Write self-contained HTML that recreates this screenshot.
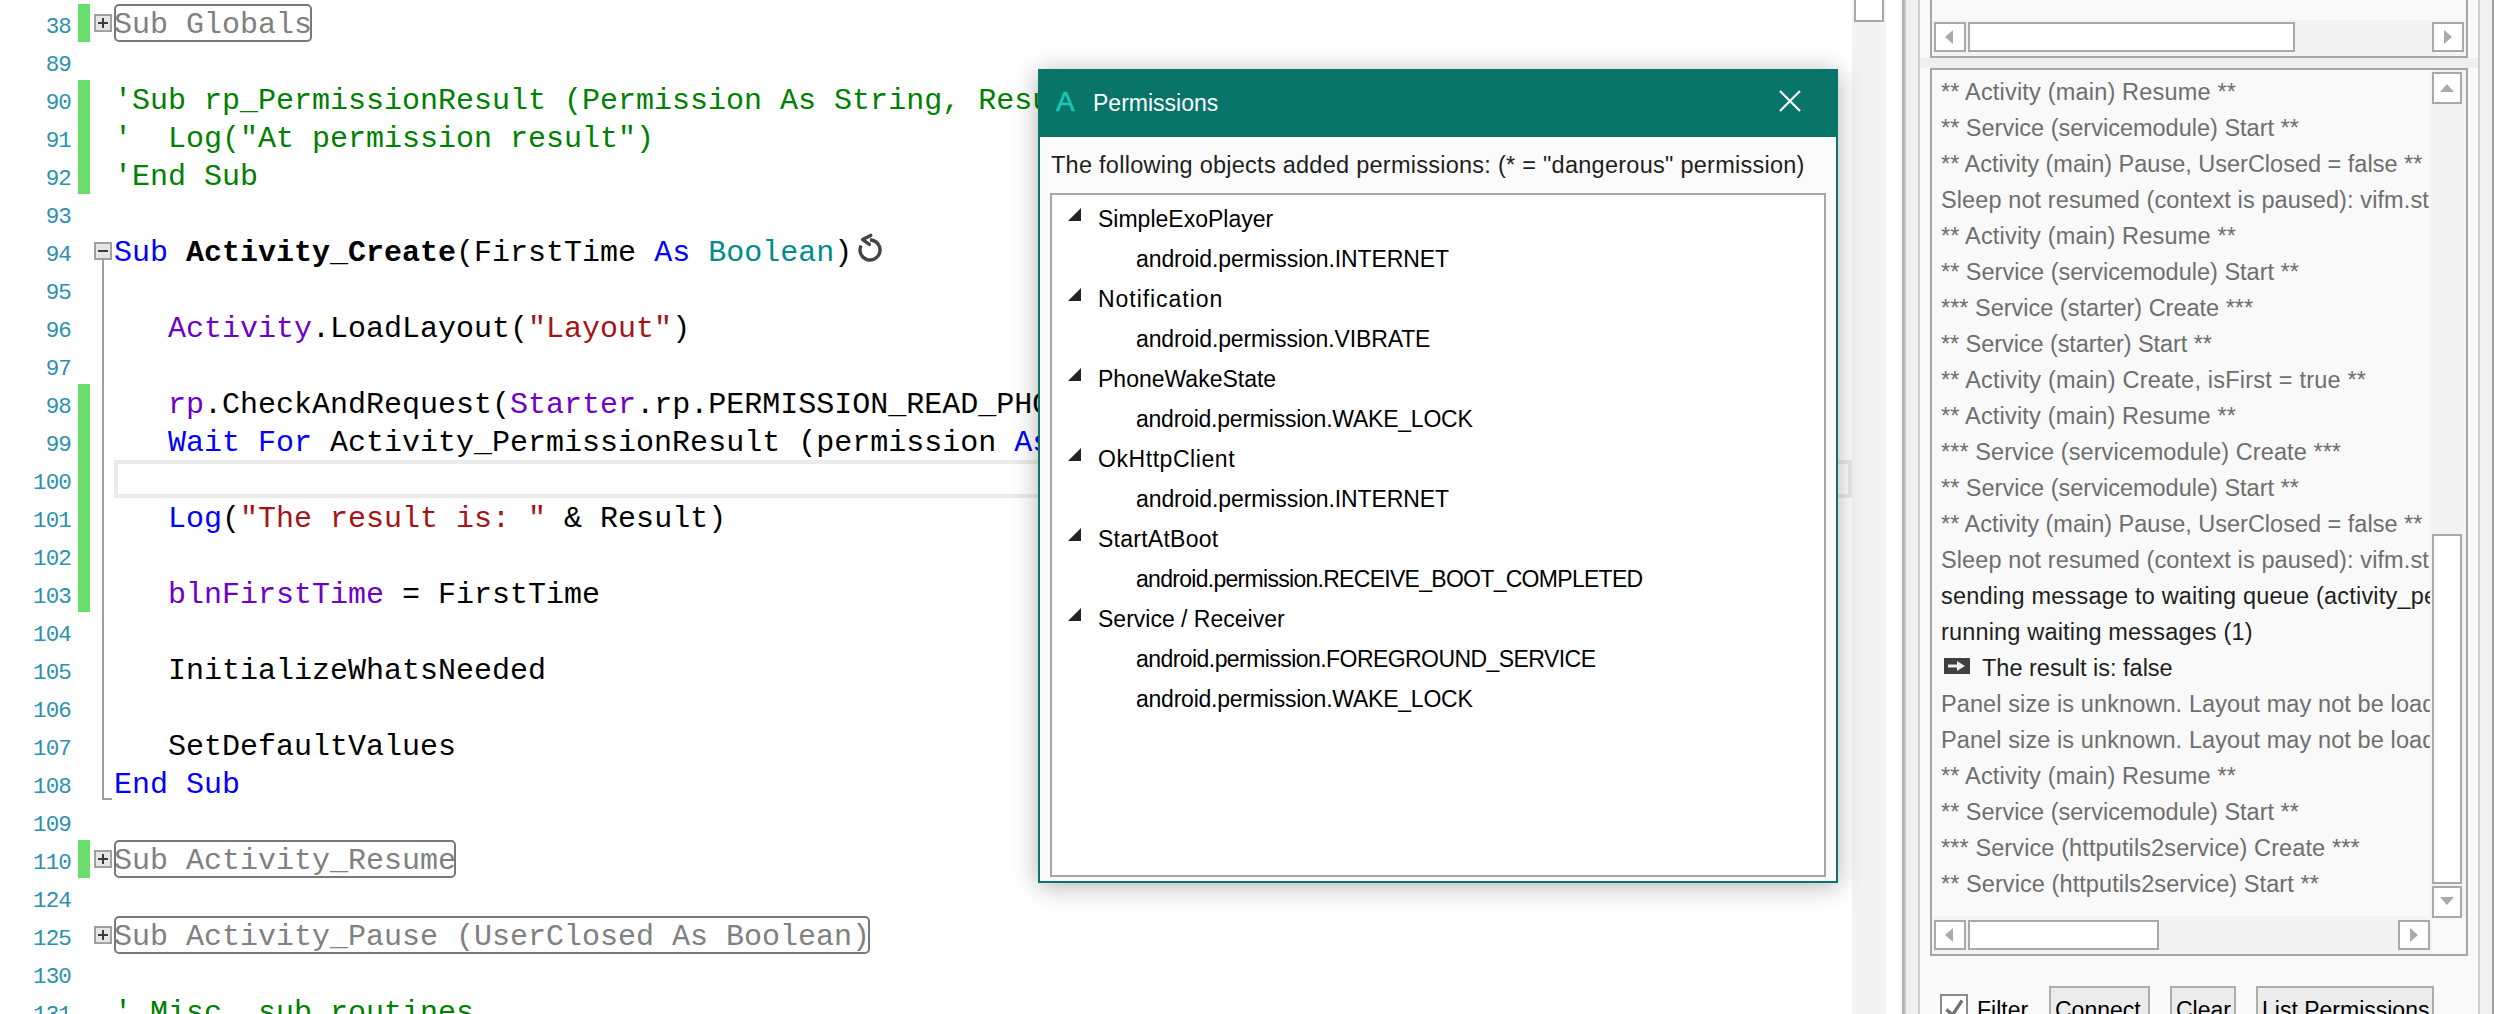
<!DOCTYPE html>
<html><head><meta charset="utf-8">
<style>
*{margin:0;padding:0;box-sizing:border-box}
html,body{width:2494px;height:1014px;overflow:hidden;background:#fff;position:relative}
.a{position:absolute}
.ln{position:absolute;left:0;width:71px;text-align:right;font-family:"Liberation Mono",monospace;font-size:22.5px;letter-spacing:-0.85px;line-height:38px;color:#2b91af;white-space:pre}
.cl{position:absolute;left:114px;font-family:"Liberation Mono",monospace;font-size:30px;line-height:38px;color:#000;white-space:pre}
.g{position:absolute;left:78px;width:12px;background:#6ade6a}
.cm{color:#008000}.kw{color:#0000ff}.ty{color:#008b8b}.ob{color:#6f00c6}.st{color:#a31515}.bd{font-weight:bold}
.fold{position:absolute;left:94px;width:18px;height:18px;border:2px solid #a0a0a0;background:#e6e6e6}
.fold:before{content:"";position:absolute;left:2px;top:6.3px;width:10px;height:1.5px;background:#3a3a3a}
.fold.p:after{content:"";position:absolute;left:6.3px;top:2px;width:1.5px;height:10px;background:#3a3a3a}
.col{position:absolute;left:114px;height:38px;border:2px solid #787878;border-radius:5px}
.cg{color:#808080}
.ss{font-family:"Liberation Sans",sans-serif}
.log{position:absolute;left:1941px;font-family:"Liberation Sans",sans-serif;font-size:23.5px;line-height:36px;color:#6e6e6e}
.log div{height:36px;white-space:pre}
.log .k{color:#1e1e1e}
.tr{position:absolute;font-family:"Liberation Sans",sans-serif;font-size:23px;line-height:40px;color:#000;white-space:pre}
.tri{position:absolute;left:1068px;width:0;height:0;border-left:13px solid transparent;border-bottom:13px solid #222}
.btn{position:absolute;top:986px;height:40px;border:2px solid #adadad;background:#ececec;font-family:"Liberation Sans",sans-serif;font-size:23px;color:#000;padding-left:4px;line-height:44px}
</style></head><body>

<!-- gutter -->
<div class="ln" style="top:8px">38</div>
<div class="ln" style="top:46px">89</div>
<div class="ln" style="top:84px">90</div>
<div class="ln" style="top:122px">91</div>
<div class="ln" style="top:160px">92</div>
<div class="ln" style="top:198px">93</div>
<div class="ln" style="top:236px">94</div>
<div class="ln" style="top:274px">95</div>
<div class="ln" style="top:312px">96</div>
<div class="ln" style="top:350px">97</div>
<div class="ln" style="top:388px">98</div>
<div class="ln" style="top:426px">99</div>
<div class="ln" style="top:464px">100</div>
<div class="ln" style="top:502px">101</div>
<div class="ln" style="top:540px">102</div>
<div class="ln" style="top:578px">103</div>
<div class="ln" style="top:616px">104</div>
<div class="ln" style="top:654px">105</div>
<div class="ln" style="top:692px">106</div>
<div class="ln" style="top:730px">107</div>
<div class="ln" style="top:768px">108</div>
<div class="ln" style="top:806px">109</div>
<div class="ln" style="top:844px">110</div>
<div class="ln" style="top:882px">124</div>
<div class="ln" style="top:920px">125</div>
<div class="ln" style="top:958px">130</div>
<div class="ln" style="top:996px">131</div>

<div class="g" style="top:4px;height:38px"></div>
<div class="g" style="top:80px;height:114px"></div>
<div class="g" style="top:384px;height:228px"></div>
<div class="g" style="top:840px;height:38px"></div>

<!-- fold markers -->
<div class="fold p" style="top:14px"></div>
<div class="fold" style="top:242px"></div>
<div class="a" style="left:102px;top:260px;width:2px;height:540px;background:#a0a0a0"></div>
<div class="a" style="left:102px;top:798px;width:10px;height:2px;background:#a0a0a0"></div>
<div class="fold p" style="top:850px"></div>
<div class="fold p" style="top:926px"></div>

<!-- current line -->
<div class="a" style="left:114px;top:460px;width:1738px;height:38px;border:4px solid #ebebeb"></div>

<!-- collapsed boxes -->
<div class="col" style="top:4px;width:198px"></div>
<div class="col" style="top:840px;width:342px"></div>
<div class="col" style="top:916px;width:756px"></div>

<!-- code -->
<div class="cl cg" style="top:6px">Sub Globals</div>
<div class="cl cm" style="top:82px">'Sub rp_PermissionResult (Permission As String, Result As Boolean)</div>
<div class="cl cm" style="top:120px">'  Log("At permission result")</div>
<div class="cl cm" style="top:158px">'End Sub</div>
<div class="cl" style="top:234px"><span class="kw">Sub</span> <span class="bd">Activity_Create</span>(FirstTime <span class="kw">As</span> <span class="ty">Boolean</span>)</div>
<div class="cl" style="top:310px">   <span class="ob">Activity</span>.LoadLayout(<span class="st">"Layout"</span>)</div>
<div class="cl" style="top:386px">   <span class="ob">rp</span>.CheckAndRequest(<span class="ob">Starter</span>.rp.PERMISSION_READ_PHONE_STATE)</div>
<div class="cl" style="top:424px">   <span class="kw">Wait</span> <span class="kw">For</span> Activity_PermissionResult (permission <span class="kw">As</span> String, Result <span class="kw">As</span> Boolean)</div>
<div class="cl" style="top:500px">   <span class="kw">Log</span>(<span class="st">"The result is: "</span> &amp; Result)</div>
<div class="cl" style="top:576px">   <span class="ob">blnFirstTime</span> = FirstTime</div>
<div class="cl" style="top:652px">   InitializeWhatsNeeded</div>
<div class="cl" style="top:728px">   SetDefaultValues</div>
<div class="cl kw" style="top:766px">End Sub</div>
<div class="cl cg" style="top:842px">Sub Activity_Resume</div>
<div class="cl cg" style="top:918px">Sub Activity_Pause (UserClosed As Boolean)</div>
<div class="cl cm" style="top:994px">' Misc. sub routines</div>

<!-- undo icon -->
<svg class="a" style="left:852px;top:232px" width="36" height="36" viewBox="-18 -18 36 36">
<path d="M0 -10 A10 10 0 1 1 -8.9 -4.5" fill="none" stroke="#444" stroke-width="3.4"/>
<path d="M0.8 -14.6 L-7.4 -10.4 L-0.6 -5.6" fill="none" stroke="#444" stroke-width="3.4" stroke-linejoin="round" stroke-linecap="round"/>
</svg>

<!-- editor v scrollbar -->
<div class="a" style="left:1852px;top:0;width:34px;height:1014px;background:#f3f3f3"></div>
<div class="a" style="left:1854px;top:-4px;width:30px;height:26px;border:2px solid #a9a9a9;background:#fff"></div>

<!-- splitter -->
<div class="a" style="left:1902px;top:0;width:4px;height:1014px;background:linear-gradient(to right,#a8a8a8,#cfcfcf)"></div>
<div class="a" style="left:1906px;top:0;width:12px;height:1014px;background:#f0f0f0"></div>
<div class="a" style="left:1918px;top:0;width:2px;height:1014px;background:#cdcdcd"></div>
<div class="a" style="left:1920px;top:0;width:558px;height:1014px;background:#f9f9f9"></div>
<div class="a" style="left:2478px;top:0;width:2px;height:1014px;background:#cdcdcd"></div>
<div class="a" style="left:2480px;top:0;width:12px;height:1014px;background:#f0f0f0"></div>
<div class="a" style="left:2492px;top:0;width:2px;height:1014px;background:#a0a0a0"></div>

<!-- top panel -->
<div class="a" style="left:1930px;top:-10px;width:538px;height:68px;border:2px solid #a6a6a6;background:#f9f9f9"></div>
<div class="a" style="left:1932px;top:20px;width:534px;height:36px;background:#f3f3f3"></div>
<div class="a" style="left:1934px;top:22px;width:32px;height:30px;border:2px solid #a9a9a9;background:#fff"></div>
<div class="a" style="left:1968px;top:22px;width:327px;height:30px;border:2px solid #a9a9a9;background:#fff"></div>
<div class="a" style="left:2432px;top:22px;width:32px;height:30px;border:2px solid #a9a9a9;background:#fff"></div>
<div class="a" style="left:1945px;top:30px;width:0;height:0;border-top:7px solid transparent;border-bottom:7px solid transparent;border-right:8px solid #aaa"></div>
<div class="a" style="left:2444px;top:30px;width:0;height:0;border-top:7px solid transparent;border-bottom:7px solid transparent;border-left:8px solid #aaa"></div>
<div class="a" style="left:1920px;top:58px;width:558px;height:10px;background:#efefef"></div>

<!-- log panel -->
<div class="a" style="left:1930px;top:68px;width:538px;height:888px;border:2px solid #a6a6a6;background:#f9f9f9"></div>
<div class="a" style="left:2430px;top:70px;width:36px;height:846px;background:#f3f3f3"></div>
<div class="a" style="left:2432px;top:72px;width:30px;height:32px;border:2px solid #a9a9a9;background:#fff"></div>
<div class="a" style="left:2440px;top:84px;width:0;height:0;border-left:7px solid transparent;border-right:7px solid transparent;border-bottom:8px solid #aaa"></div>
<div class="a" style="left:2432px;top:534px;width:30px;height:350px;border:2px solid #a9a9a9;background:#fff"></div>
<div class="a" style="left:2432px;top:886px;width:30px;height:32px;border:2px solid #a9a9a9;background:#fff"></div>
<div class="a" style="left:2440px;top:897px;width:0;height:0;border-left:7px solid transparent;border-right:7px solid transparent;border-top:8px solid #aaa"></div>

<div class="a" style="left:1932px;top:916px;width:500px;height:38px;background:#f3f3f3"></div>
<div class="a" style="left:1934px;top:920px;width:32px;height:30px;border:2px solid #a9a9a9;background:#fff"></div>
<div class="a" style="left:1968px;top:920px;width:191px;height:30px;border:2px solid #a9a9a9;background:#fff"></div>
<div class="a" style="left:2398px;top:920px;width:32px;height:30px;border:2px solid #a9a9a9;background:#fff"></div>
<div class="a" style="left:1945px;top:928px;width:0;height:0;border-top:7px solid transparent;border-bottom:7px solid transparent;border-right:8px solid #aaa"></div>
<div class="a" style="left:2410px;top:928px;width:0;height:0;border-top:7px solid transparent;border-bottom:7px solid transparent;border-left:8px solid #aaa"></div>

<div class="log" style="top:74px;width:489px;overflow:hidden;height:830px">
<div style="letter-spacing:0.185px">** Activity (main) Resume **</div>
<div>** Service (servicemodule) Start **</div>
<div>** Activity (main) Pause, UserClosed = false **</div>
<div style="letter-spacing:0.1px">Sleep not resumed (context is paused): vifm.st</div>
<div style="letter-spacing:0.185px">** Activity (main) Resume **</div>
<div>** Service (servicemodule) Start **</div>
<div>*** Service (starter) Create ***</div>
<div style="letter-spacing:-0.07px">** Service (starter) Start **</div>
<div style="letter-spacing:0.21px">** Activity (main) Create, isFirst = true **</div>
<div style="letter-spacing:0.185px">** Activity (main) Resume **</div>
<div style="letter-spacing:0.08px">*** Service (servicemodule) Create ***</div>
<div>** Service (servicemodule) Start **</div>
<div>** Activity (main) Pause, UserClosed = false **</div>
<div style="letter-spacing:0.1px">Sleep not resumed (context is paused): vifm.st</div>
<div class="k" style="letter-spacing:0.2px">sending message to waiting queue (activity_permissionresult)</div>
<div class="k" style="letter-spacing:0.17px">running waiting messages (1)</div>
<div class="k" style="padding-left:41px">The result is: false</div>
<div style="letter-spacing:0.1px">Panel size is unknown. Layout may not be loaded</div>
<div style="letter-spacing:0.1px">Panel size is unknown. Layout may not be loaded</div>
<div style="letter-spacing:0.185px">** Activity (main) Resume **</div>
<div>** Service (servicemodule) Start **</div>
<div style="letter-spacing:0.11px">*** Service (httputils2service) Create ***</div>
<div style="letter-spacing:0.08px">** Service (httputils2service) Start **</div>
</div>
<svg class="a" style="left:1944px;top:658px" width="26" height="16" viewBox="0 0 26 16">
<rect width="26" height="16" fill="#3f3f3f"/>
<path d="M4 6.5 H13 V3 L21 8 L13 13 V9.5 H4 Z" fill="#eee"/>
</svg>

<!-- bottom controls -->
<div class="a" style="left:1940px;top:994px;width:28px;height:28px;border:2px solid #8a8a8a;background:#fff"></div>
<svg class="a" style="left:1940px;top:994px" width="30" height="22"><path d="M6.5 15.5 L12.5 21 L22 6.5" fill="none" stroke="#707070" stroke-width="3.2"/></svg>
<div class="a ss" style="left:1977px;top:992px;font-size:23px;line-height:36px;color:#000">Filter</div>
<div class="btn" style="left:2049px;width:101px">Connect</div>
<div class="btn" style="left:2170px;width:66px">Clear</div>
<div class="btn" style="left:2256px;width:178px">List Permissions</div>

<!-- dialog -->
<div class="a" style="left:1038px;top:69px;width:800px;height:814px;background:#fbfbfb;border:2px solid #087568;box-shadow:0 3px 24px rgba(0,0,0,0.3)">
  <div class="a" style="left:-2px;top:-2px;width:800px;height:68px;background:#087568"></div>
</div>
<div class="a ss" style="left:1056px;top:88px;font-size:28px;color:#1cc4b3;line-height:28px;-webkit-text-stroke:0.6px #1cc4b3">A</div>
<div class="a ss" style="left:1093px;top:85px;font-size:23px;line-height:36px;color:#fff">Permissions</div>
<svg class="a" style="left:1778px;top:89px" width="24" height="24" viewBox="0 0 24 24"><path d="M2 2 L22 22 M22 2 L2 22" stroke="#fff" stroke-width="2.2"/></svg>
<div class="a ss" style="left:1051px;top:147px;font-size:23.5px;line-height:36px;color:#1e1e1e;white-space:pre;letter-spacing:0.26px">The following objects added permissions: (* = "dangerous" permission)</div>

<div class="a" style="left:1050px;top:193px;width:776px;height:684px;border:2px solid #a6a6a6;background:#fff"></div>
<div class="tri" style="top:208px"></div>
<div class="tri" style="top:288px"></div>
<div class="tri" style="top:368px"></div>
<div class="tri" style="top:448px"></div>
<div class="tri" style="top:528px"></div>
<div class="tri" style="top:608px"></div>
<div class="tr" style="left:1098px;top:199px">SimpleExoPlayer</div>
<div class="tr" style="left:1136px;top:239px;letter-spacing:-0.1px">android.permission.INTERNET</div>
<div class="tr" style="left:1098px;top:279px;letter-spacing:0.95px">Notification</div>
<div class="tr" style="left:1136px;top:319px;letter-spacing:-0.12px">android.permission.VIBRATE</div>
<div class="tr" style="left:1098px;top:359px">PhoneWakeState</div>
<div class="tr" style="left:1136px;top:399px;letter-spacing:-0.23px">android.permission.WAKE_LOCK</div>
<div class="tr" style="left:1098px;top:439px;letter-spacing:0.56px">OkHttpClient</div>
<div class="tr" style="left:1136px;top:479px;letter-spacing:-0.1px">android.permission.INTERNET</div>
<div class="tr" style="left:1098px;top:519px;letter-spacing:0.25px">StartAtBoot</div>
<div class="tr" style="left:1136px;top:559px;letter-spacing:-0.71px">android.permission.RECEIVE_BOOT_COMPLETED</div>
<div class="tr" style="left:1098px;top:599px">Service / Receiver</div>
<div class="tr" style="left:1136px;top:639px;letter-spacing:-0.56px">android.permission.FOREGROUND_SERVICE</div>
<div class="tr" style="left:1136px;top:679px;letter-spacing:-0.23px">android.permission.WAKE_LOCK</div>

</body></html>
